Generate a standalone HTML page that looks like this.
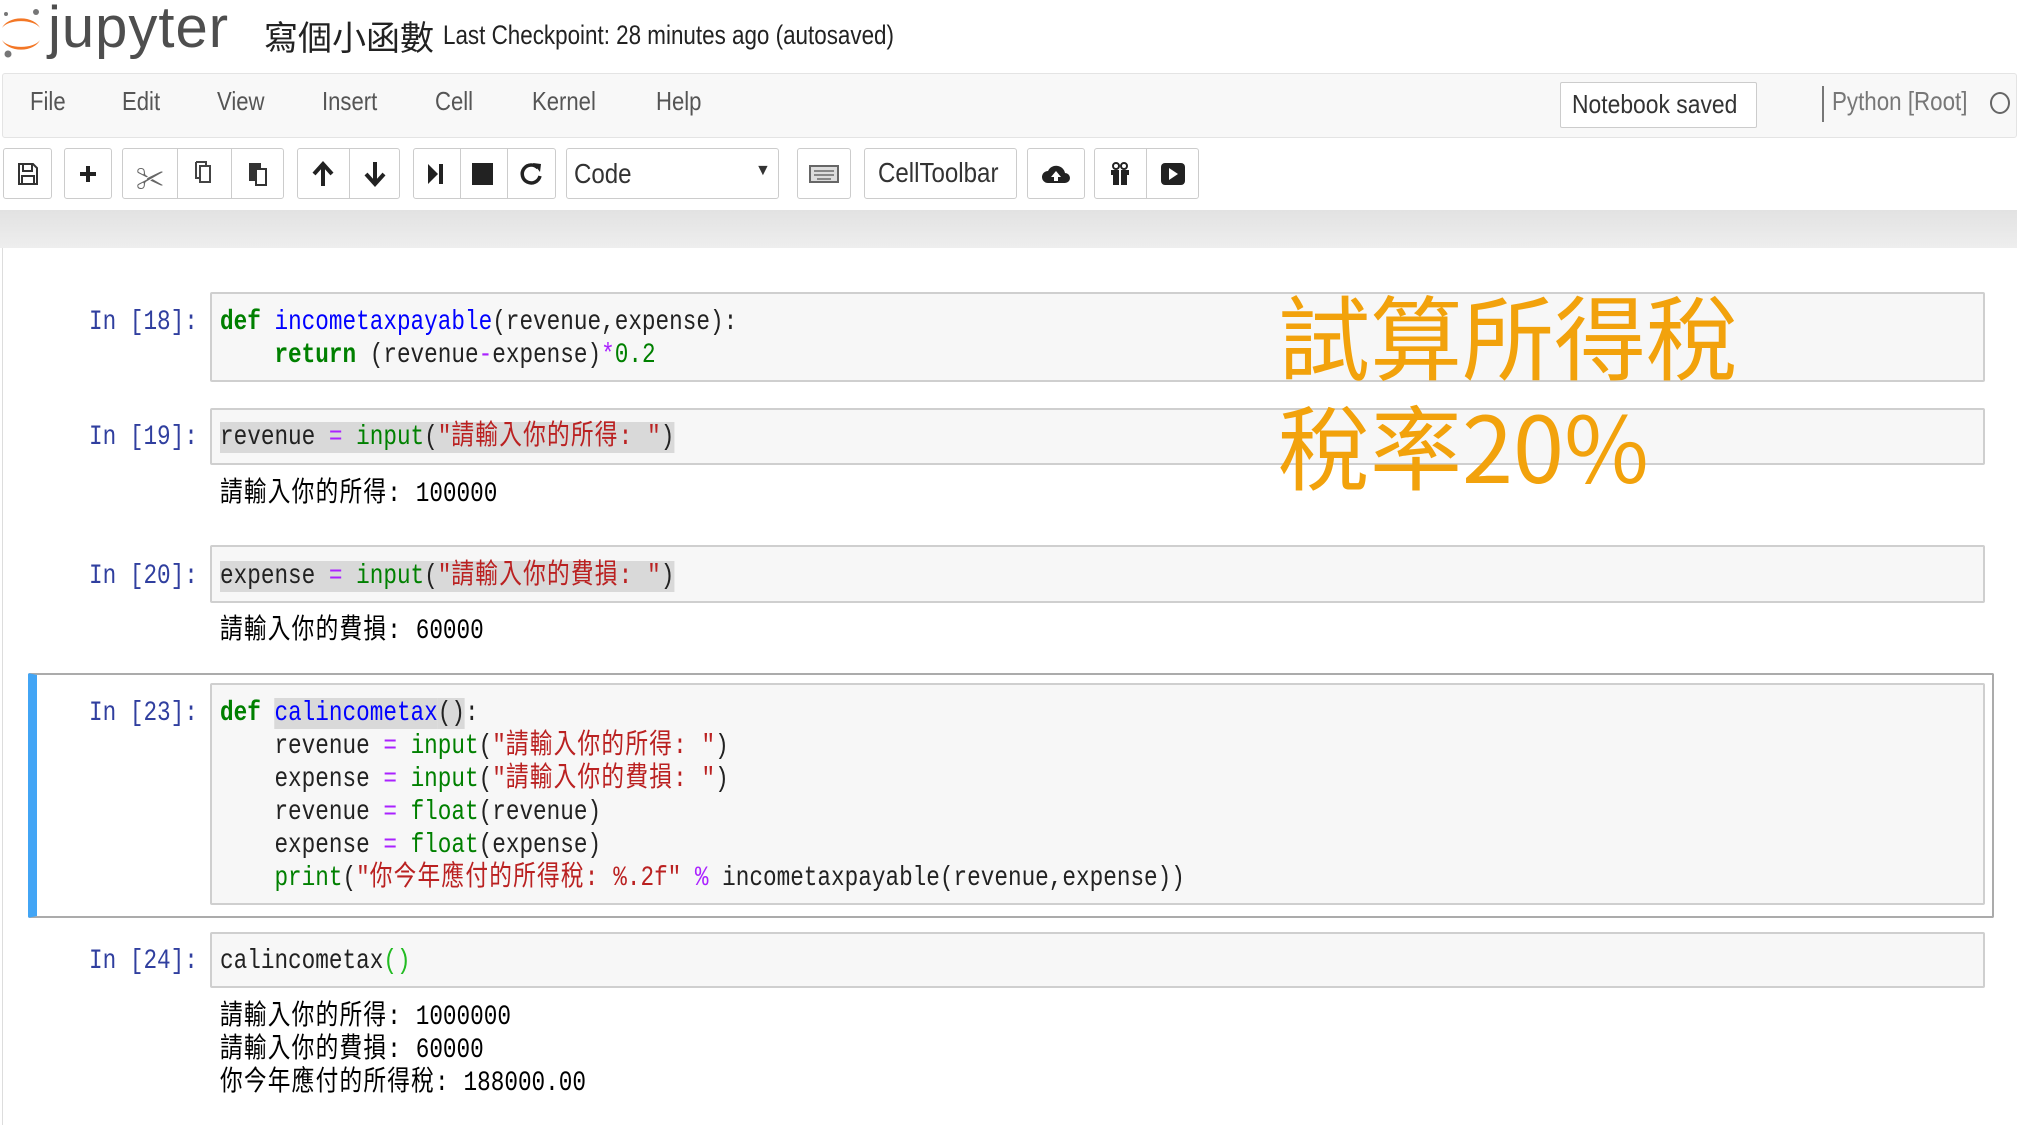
<!DOCTYPE html>
<html><head><meta charset="utf-8">
<style>
*{margin:0;padding:0;box-sizing:border-box}
body{width:2017px;height:1125px;background:#fff;position:relative;overflow:hidden;font-family:"Liberation Sans","Noto Sans CJK TC",sans-serif;color:#333}
.abs{position:absolute}
.menu span{position:absolute;top:86px;font-size:26px;color:#555;transform:scaleX(.85);transform-origin:left}
.btn{position:absolute;top:148px;height:51px;border:1px solid #ccc;border-radius:3px;background:#fff}
.btn svg{position:absolute;left:50%;top:50%;transform:translate(-50%,-50%)}
.sep{position:absolute;top:148px;width:1px;height:51px;background:#ccc}
.cell{position:absolute;left:210px;width:1775px;background:#f7f7f7;border:2px solid #cfcfcf;border-radius:2px}
.mono{font-family:"Liberation Mono","Noto Sans CJK TC",monospace;font-size:28px;line-height:33px;white-space:pre;transform:scaleX(.81);transform-origin:left center;position:absolute;color:#222}
.c{letter-spacing:1.5px}
.p{color:#303f9f}
.k{color:#008000;font-weight:bold}
.b{color:#008000}
.f{color:#0000ff}
.s{color:#ba2121}
.n{color:#008000}
.o{color:#aa22ff}
.hl{background:#d9d9d9}
.out{color:#000}
.or{position:absolute;left:1278px;color:#f2a20c;font-family:"Noto Sans CJK TC","Liberation Sans",sans-serif;font-size:92px;line-height:110px;white-space:nowrap}
</style></head><body>

<!-- header -->
<svg class="abs" style="left:0;top:4px" width="48" height="56" viewBox="0 0 48 56">
<path d="M2 24 A20 14 0 0 1 40 24 A20 10 0 0 0 2 24Z" fill="#f37726"/>
<path d="M2 36 A20 14 0 0 0 40 36 A20 10 0 0 1 2 36Z" fill="#f37726"/>
<circle cx="36" cy="8" r="3" fill="#767677"/><circle cx="8" cy="50" r="3.5" fill="#767677"/><circle cx="6" cy="10" r="2" fill="#767677"/>
</svg>
<div class="abs" style="left:48px;top:-6px;font-size:58px;color:#4e4e4e;letter-spacing:1px">jupyter</div>
<div class="abs" style="left:264px;top:12px;font-size:34px;color:#222;font-family:'Noto Sans CJK TC',sans-serif;line-height:48px">寫個小函數</div>
<div class="abs" style="left:443px;top:20px;font-size:27px;color:#222;white-space:nowrap;transform:scaleX(.83);transform-origin:left">Last Checkpoint: 28 minutes ago (autosaved)</div>

<!-- menubar -->
<div class="abs" style="left:2px;top:73px;width:2015px;height:65px;background:#f8f8f8;border:1px solid #e4e4e4;border-radius:3px"></div>
<div class="menu">
<span style="left:30px">File</span><span style="left:122px">Edit</span><span style="left:217px">View</span><span style="left:322px">Insert</span><span style="left:435px">Cell</span><span style="left:532px">Kernel</span><span style="left:656px">Help</span>
</div>
<div class="abs" style="left:1560px;top:82px;width:197px;height:46px;background:#fff;border:1px solid #ccc;border-radius:2px"></div>
<div class="abs" style="left:1572px;top:89px;font-size:26px;color:#333;transform:scaleX(.88);transform-origin:left;white-space:nowrap">Notebook saved</div>
<div class="abs" style="left:1822px;top:86px;width:2px;height:36px;background:#777"></div>
<div class="abs" style="left:1832px;top:86px;font-size:26px;color:#777;transform:scaleX(.86);transform-origin:left;white-space:nowrap">Python [Root]</div>
<div class="abs" style="left:1990px;top:92px;width:20px;height:22px;border:2.5px solid #666;border-radius:50%"></div>

<!-- toolbar -->
<div class="btn" style="left:3px;width:49px"><svg width="22" height="24" viewBox="0 0 22 24"><path d="M2 2h14l4 4v16H2z M6 2v7h9V2 M5 14h12v8H5z" fill="none" stroke="#333" stroke-width="2"/></svg></div>
<div class="btn" style="left:64px;width:48px"><svg width="20" height="20"><path d="M10 2v16M2 10h16" stroke="#222" stroke-width="4"/></svg></div>
<div class="btn" style="left:122px;width:162px"></div>
<div class="sep" style="left:177px"></div><div class="sep" style="left:231px"></div>
<div class="abs" style="left:136px;top:158px;font-size:28px;color:#666">✂</div>
<svg class="abs" style="left:192px;top:160px" width="24" height="26"><path d="M8 6h10v16H8z M4 2h10v4 M4 2v16h4" fill="none" stroke="#444" stroke-width="2"/></svg>
<svg class="abs" style="left:246px;top:160px" width="24" height="28"><path d="M3 3h12v18H3z" fill="#333"/><path d="M10 9h10v16H10z" fill="#fff" stroke="#333" stroke-width="2"/></svg>
<div class="btn" style="left:297px;width:103px"></div><div class="sep" style="left:349px"></div>
<svg class="abs" style="left:311px;top:160px" width="24" height="28"><path d="M12 26V6M3 14l9-10 9 10" fill="none" stroke="#222" stroke-width="4"/></svg>
<svg class="abs" style="left:363px;top:160px" width="24" height="28"><path d="M12 2v20M3 14l9 10 9-10" fill="none" stroke="#222" stroke-width="4"/></svg>
<div class="btn" style="left:413px;width:143px"></div><div class="sep" style="left:460px"></div><div class="sep" style="left:507px"></div>
<svg class="abs" style="left:426px;top:162px" width="20" height="24"><path d="M2 2l10 10-10 10z" fill="#222"/><rect x="13" y="2" width="4" height="20" fill="#222"/></svg>
<div class="abs" style="left:472px;top:163px;width:21px;height:22px;background:#222"></div>
<svg class="abs" style="left:518px;top:160px" width="26" height="28"><path d="M20 8A9 9 0 1 0 22 16" fill="none" stroke="#222" stroke-width="3.5"/><path d="M15 3l8 1-1 8z" fill="#222"/></svg>
<div class="btn" style="left:566px;width:213px"></div>
<div class="abs" style="left:574px;top:158px;font-size:28px;color:#333;transform:scaleX(.86);transform-origin:left">Code</div>
<div class="abs" style="left:755px;top:162px;font-size:16px;color:#333">▼</div>
<div class="btn" style="left:797px;width:54px"><svg width="30" height="18"><rect x="1" y="1" width="28" height="16" fill="#ddd" stroke="#666" stroke-width="2"/><path d="M5 6h20M5 10h20M8 14h14" stroke="#888" stroke-width="2"/></svg></div>
<div class="btn" style="left:864px;width:153px"></div>
<div class="abs" style="left:878px;top:157px;font-size:28px;color:#333;transform:scaleX(.86);transform-origin:left;white-space:nowrap">CellToolbar</div>
<div class="btn" style="left:1027px;width:58px"><svg width="28" height="22"><path d="M6 20a6 6 0 0 1 0-12a9 9 0 0 1 17 2a5 5 0 0 1 0 10z" fill="#222"/><path d="M14 8l-5 6h3v4h4v-4h3z" fill="#fff"/></svg></div>
<div class="btn" style="left:1094px;width:105px"></div><div class="sep" style="left:1146px"></div>
<svg class="abs" style="left:1108px;top:162px" width="24" height="24"><path d="M3 8h18v5H3zM5 13h14v10H5z" fill="#222"/><path d="M12 8v15" stroke="#fff" stroke-width="2"/><circle cx="8" cy="4" r="3" fill="none" stroke="#222" stroke-width="2"/><circle cx="16" cy="4" r="3" fill="none" stroke="#222" stroke-width="2"/></svg>
<svg class="abs" style="left:1160px;top:162px" width="26" height="24"><rect x="1" y="1" width="24" height="22" rx="4" fill="#222"/><path d="M9 6l9 6-9 6z" fill="#fff"/></svg>

<!-- band -->
<div class="abs" style="left:0;top:210px;width:2017px;height:38px;background:linear-gradient(#e2e2e2,#eeeeee)"></div>
<div class="abs" style="left:2px;top:248px;width:1px;height:877px;background:#ddd"></div>

<!-- cell 18 -->
<div class="cell" style="top:292px;height:90px"></div>
<div class="mono p" style="left:89px;top:306px">In [18]:</div>
<div class="mono" style="left:220px;top:306px"><span class="k">def</span> <span class="f">incometaxpayable</span>(revenue,expense):
    <span class="k">return</span> (revenue<span class="o">-</span>expense)<span class="o">*</span><span class="n">0.2</span></div>

<!-- cell 19 -->
<div class="cell" style="top:408px;height:57px"></div>
<div class="mono p" style="left:89px;top:421px">In [19]:</div>
<div class="mono" style="left:220px;top:421px"><span class="hl">revenue <span class="o">=</span> <span class="b">input</span>(<span class="s">"<span class="c">請輸入你的所得:</span> "</span>)</span></div>
<div class="mono out" style="left:220px;top:478px"><span class="c">請輸入你的所得:</span> 100000</div>

<!-- cell 20 -->
<div class="cell" style="top:545px;height:58px"></div>
<div class="mono p" style="left:89px;top:560px">In [20]:</div>
<div class="mono" style="left:220px;top:560px"><span class="hl">expense <span class="o">=</span> <span class="b">input</span>(<span class="s">"<span class="c">請輸入你的費損:</span> "</span>)</span></div>
<div class="mono out" style="left:220px;top:615px"><span class="c">請輸入你的費損:</span> 60000</div>

<!-- cell 23 selected -->
<div class="abs" style="left:28px;top:673px;width:1966px;height:245px;border:2px solid #ababab;border-left:9px solid #42a5f5;border-radius:2px"></div>
<div class="cell" style="top:683px;height:222px"></div>
<div class="mono p" style="left:89px;top:697px">In [23]:</div>
<div class="mono" style="left:220px;top:697px"><span class="k">def</span> <span class="f hl">calincometax</span><span class="hl">()</span>:
    revenue <span class="o">=</span> <span class="b">input</span>(<span class="s">"<span class="c">請輸入你的所得:</span> "</span>)
    expense <span class="o">=</span> <span class="b">input</span>(<span class="s">"<span class="c">請輸入你的費損:</span> "</span>)
    revenue <span class="o">=</span> <span class="b">float</span>(revenue)
    expense <span class="o">=</span> <span class="b">float</span>(expense)
    <span class="b">print</span>(<span class="s">"<span class="c">你今年應付的所得稅:</span> %.2f"</span> <span class="o">%</span> incometaxpayable(revenue,expense))</div>

<!-- cell 24 -->
<div class="cell" style="top:932px;height:56px"></div>
<div class="mono p" style="left:89px;top:945px">In [24]:</div>
<div class="mono" style="left:220px;top:945px">calincometax<span style="color:#22bb22">()</span></div>
<div class="mono out" style="left:220px;top:1001px"><span class="c">請輸入你的所得:</span> 1000000
<span class="c">請輸入你的費損:</span> 60000
<span class="c">你今年應付的所得稅:</span> 188000.00</div>

<!-- overlay -->
<div class="or" style="top:279px">試算所得稅</div>
<div class="or" style="top:389px">稅率20%</div>
</body></html>
